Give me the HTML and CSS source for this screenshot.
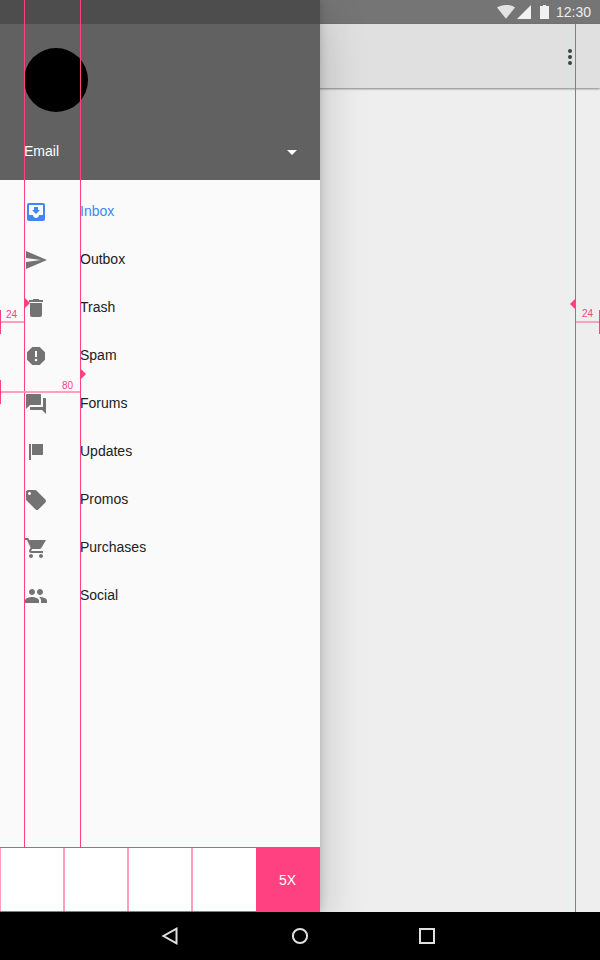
FILE: index.html
```html
<!DOCTYPE html>
<html lang="en">
<head>
<meta charset="utf-8">
<title>Navigation drawer</title>
<link rel="stylesheet" href="styles.css">
</head>
<body>
<div class="device">
  <header class="status-bar">
    <svg class="status-icons" width="54" height="24" viewBox="0 0 54 24">
      <path class="wifi" d="M10 18.700 1 7.400C3.500 5.800 6.500 4.900 10 4.900s6.500.9 9 2.500z"/>
      <path d="M21 19 35 5v14z"/>
      <path d="M44 6h3V5h3v1h3v13h-9z"/>
    </svg>
    <span class="clock">12:30</span>
  </header>
  <div class="app-bar">
    <svg class="more" width="24" height="24" viewBox="0 0 24 24"><circle cx="12" cy="6" r="2"/><circle cx="12" cy="12" r="2"/><circle cx="12" cy="18" r="2"/></svg>
  </div>
  <main class="content"></main>

  <aside class="drawer">
    <div class="profile">
      <div class="avatar"></div>
      <div class="account">
        <span>Email</span>
        <svg width="24" height="24" viewBox="0 0 24 24"><path d="M7 10l5 5 5-5z"/></svg>
      </div>
    </div>
    <nav class="menu">
      <a class="item active"><svg viewBox="0 0 24 24"><path d="M19 3H4.990c-1.110 0-1.980.9-1.980 2L3 19c0 1.100.88 2 1.990 2H19c1.100 0 2-.9 2-2V5c0-1.100-.9-2-2-2zm0 12h-4c0 1.660-1.350 3-3 3s-3-1.340-3-3H4.990V5H19v10zm-3-5h-2V7h-4v3H8l4 4 4-4z"/></svg><span>Inbox</span></a>
      <a class="item"><svg viewBox="0 0 24 24"><path d="M2.010 21 23 12 2.010 3 2 10l15 2-15 2z"/></svg><span>Outbox</span></a>
      <a class="item"><svg viewBox="0 0 24 24"><path d="M6 19c0 1.100.9 2 2 2h8c1.100 0 2-.9 2-2V7H6v12zM19 4h-3.500l-1-1h-5l-1 1H5v2h14V4z"/></svg><span>Trash</span></a>
      <a class="item"><svg viewBox="0 0 24 24"><path d="M15.730 3H8.270L3 8.270v7.460L8.270 21h7.460L21 15.730V8.270L15.730 3zM12 17.300c-.72 0-1.300-.58-1.300-1.300s.58-1.300 1.300-1.300 1.300.58 1.300 1.300-.58 1.300-1.300 1.300zm1-4.300h-2V7h2v6z"/></svg><span>Spam</span></a>
      <a class="item"><svg viewBox="0 0 24 24"><path d="M21 6h-2v9H6v2c0 .55.45 1 1 1h11l4 4V7c0-.55-.45-1-1-1zm-4 6V3c0-.55-.45-1-1-1H3c-.55 0-1 .45-1 1v14l4-4h10c.55 0 1-.45 1-1z"/></svg><span>Forums</span></a>
      <a class="item"><svg viewBox="0 0 24 24"><path d="M5 4h2v16H5zM8 4h11v11H8z"/></svg><span>Updates</span></a>
      <a class="item"><svg viewBox="0 0 24 24"><path d="M21.410 11.580l-9-9C12.050 2.220 11.550 2 11 2H4c-1.100 0-2 .9-2 2v7c0 .55.22 1.050.59 1.420l9 9c.36.36.86.58 1.410.58s1.050-.22 1.410-.59l7-7c.37-.36.59-.86.59-1.410s-.23-1.060-.59-1.420zM5.500 7C4.670 7 4 6.330 4 5.500S4.670 4 5.500 4 7 4.670 7 5.500 6.330 7 5.500 7z"/></svg><span>Promos</span></a>
      <a class="item"><svg viewBox="0 0 24 24"><path d="M7 18c-1.100 0-1.990.9-1.990 2S5.900 22 7 22s2-.9 2-2-.9-2-2-2zM1 2v2h2l3.600 7.590-1.350 2.450c-.16.28-.25.61-.25.96 0 1.100.9 2 2 2h12v-2H7.420c-.14 0-.25-.11-.25-.25l.03-.12.9-1.630h7.450c.75 0 1.410-.41 1.750-1.030L22 4H5.210l-.94-2H1zm16 16c-1.100 0-1.990.9-1.990 2s.89 2 1.990 2 2-.9 2-2-.9-2-2-2z"/></svg><span>Purchases</span></a>
      <a class="item"><svg viewBox="0 0 24 24"><path d="M16 11c1.660 0 2.990-1.340 2.990-3S17.660 5 16 5s-3 1.340-3 3 1.340 3 3 3zm-8 0c1.660 0 2.990-1.340 2.990-3S9.660 5 8 5 5 6.340 5 8s1.340 3 3 3zm0 2c-2.330 0-7 1.170-7 3.500V19h14v-2.500c0-2.330-4.670-3.500-7-3.500zm8 0c-.29 0-.62.02-.97.05 1.160.84 1.970 1.970 1.970 3.450V19h6v-2.500c0-2.330-4.670-3.500-7-3.500z"/></svg><span>Social</span></a>
    </nav>
    <div class="increments">
      <div class="unit"></div>
      <div class="unit"></div>
      <div class="unit"></div>
      <div class="unit"></div>
      <div class="unit total">5X</div>
    </div>
  </aside>

  <footer class="system-nav">
    <svg width="24" height="24" viewBox="0 0 24 24"><path d="M18.500 4.700v14.600L5.500 12z"/></svg>
    <svg width="24" height="24" viewBox="0 0 24 24"><circle cx="12" cy="12" r="7.100"/></svg>
    <svg width="24" height="24" viewBox="0 0 24 24"><path d="M5 5h14v14H5z"/></svg>
  </footer>

  <div class="guide guide-icon"></div>
  <div class="guide guide-text"></div>
  <div class="guide guide-end"></div>
  <div class="arrow arrow-icon"></div>
  <div class="arrow arrow-text"></div>
  <div class="arrow arrow-end"></div>
  <div class="measure measure-icon"><span>24</span></div>
  <div class="measure measure-text"><span>80</span></div>
  <div class="measure measure-end"><span>24</span></div>
</div>
</body>
</html>
```
FILE: styles.css
```css
* { box-sizing: border-box; }

body {
  margin: 0;
  font-family: "Liberation Sans", Arial, sans-serif;
  font-size: 14px;
}

svg { display: block; flex: none; }

.device {
  position: relative;
  display: flex;
  flex-direction: column;
  width: 600px;
  height: 960px;
  overflow: hidden;
  background: #eee;
}

.status-bar {
  display: flex;
  justify-content: flex-end;
  align-items: center;
  height: 24px;
  padding-right: 9px;
  gap: 6px;
  background: #757575;
  color: #ededed;
}
.status-icons { fill: #f1f1f1; }
.wifi { fill: #e3e3e3; }
.clock { line-height: 24px; width: 35px; }

.app-bar {
  display: flex;
  justify-content: flex-end;
  align-items: center;
  height: 64px;
  padding: 2px 18px 0 0;
  background: #e0e0e0;
  box-shadow: 0 1px 2px rgba(0, 0, 0, .45);
}
.more { fill: #424242; }

.content { flex: 1; }

.drawer {
  position: absolute;
  top: 0;
  left: 0;
  display: flex;
  flex-direction: column;
  width: 320px;
  height: 912px;
  background: #fafafa;
  box-shadow: 0 0 8px rgba(0, 0, 0, .16), 0 16px 44px rgba(0, 0, 0, .22);
}

.profile {
  display: flex;
  flex-direction: column;
  justify-content: space-between;
  height: 180px;
  padding: 48px 16px 16px 24px;
  background: linear-gradient(#4d4d4d 24px, #616161 24px);
  color: #fff;
}
.avatar {
  width: 64px;
  height: 64px;
  border-radius: 50%;
  background: #000;
}
.account {
  display: flex;
  justify-content: space-between;
  align-items: center;
  height: 24px;
}
.account span { line-height: 24px; margin-top: -2px; }
.account svg { fill: #fff; }

.menu {
  flex: 1;
  padding-top: 8px;
}
.item {
  display: flex;
  align-items: center;
  gap: 32px;
  height: 48px;
  padding-left: 24px;
  color: #212121;
}
.item svg {
  width: 24px;
  height: 24px;
  fill: #737373;
}
.item span { margin-top: -2px; }
.active { color: #4285f4; }
.active svg { fill: #4285f4; }

.increments {
  display: grid;
  grid-template-columns: repeat(5, 64px);
  height: 65px;
  border-top: 1px solid #ff4081;
  border-bottom: 1px solid #ff4081;
  background: #fff;
}
.unit {
  border: solid #ff9fc0;
  border-width: 0 1px;
}
.unit:nth-child(4) { border-right: 0; }
.total {
  display: flex;
  justify-content: center;
  align-items: center;
  padding-right: 1px;
  border: 0;
  background: #ff4081;
  color: #fff;
}

.system-nav {
  position: relative;
  display: flex;
  justify-content: space-between;
  align-items: center;
  height: 48px;
  padding: 0 161px 0 158px;
  background: #000;
}
.system-nav svg {
  fill: none;
  stroke: #e0e0e0;
  stroke-width: 2;
}
.system-nav svg:nth-child(2) { margin-left: 3px; }

/* Keyline overlay */
.guide {
  position: absolute;
  top: 0;
  width: 1px;
  height: 848px;
  background: #ff4081;
}
.guide-icon { left: 24px; }
.guide-text { left: 80px; }
.guide-end { left: 575px; top: 24px; height: 888px; }

.arrow {
  position: absolute;
  width: 5px;
  height: 10px;
  background: #ff4081;
  clip-path: polygon(0 0, 100% 50%, 0 100%);
}
.arrow-icon { left: 25px; top: 298px; }
.arrow-text { left: 81px; top: 369px; }
.arrow-end { left: 570px; top: 299px; transform: scaleX(-1); }

.measure {
  position: absolute;
  height: 24px;
  border-left: 1px solid #ff4081;
  background: linear-gradient(#ff9fc0, #ff9fc0) 0 11px / 100% 2px no-repeat;
  color: #ff4081;
  font-size: 10px;
  line-height: 10px;
}
.measure span { position: absolute; top: 0; }
.measure-icon { left: 0; top: 310px; width: 24px; }
.measure-icon span { left: 5px; }
.measure-text { left: 0; top: 380px; width: 80px; }
.measure-text span { top: 1px; left: 61px; }
.measure-end {
  left: 576px;
  top: 310px;
  width: 24px;
  border-left: 0;
  border-right: 1px solid #ff4081;
}
.measure-end span { top: -1px; left: 6px; }
```
